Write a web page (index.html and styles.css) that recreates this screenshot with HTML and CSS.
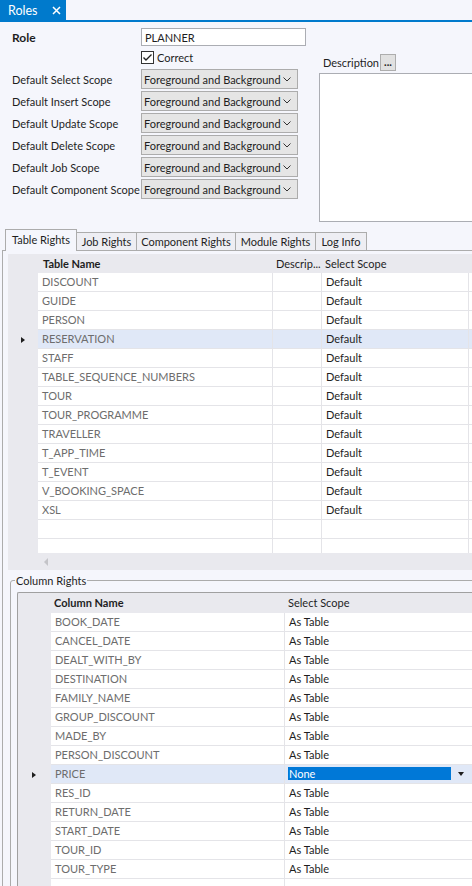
FILE: index.html
```html
<!DOCTYPE html>
<html>
<head>
<meta charset="utf-8">
<title>Roles</title>
<link rel="stylesheet" href="styles.css">
</head>
<body>
<div class="doc-tabs">
  <div class="doc-tab"><span>Roles</span><svg class="close" width="9" height="9" viewBox="0 0 9 9"><path d="M1 1L8 8M8 1L1 8" stroke="#fff" stroke-width="1.5" fill="none"/></svg></div>
</div>

<div class="form">
  <div class="fields">
    <div class="row role-row"><span class="lbl bold role-lbl">Role</span><div class="textbox">PLANNER</div></div>
    <div class="row check-row"><span class="lbl"></span><span class="check"><svg width="11" height="11" viewBox="0 0 11 11"><path d="M1.5 5.5L4 8L9.5 2.5" stroke="#222" stroke-width="1.4" fill="none"/></svg></span><span>Correct</span></div>
    <div class="combos">
      <div class="row"><span class="lbl">Default Select Scope</span><div class="combo"><span>Foreground and Background</span><svg width="8" height="5" viewBox="0 0 8 5"><path d="M0.5 0.5L4 4L7.5 0.5" stroke="#333" fill="none"/></svg></div></div>
      <div class="row"><span class="lbl">Default Insert Scope</span><div class="combo"><span>Foreground and Background</span><svg width="8" height="5" viewBox="0 0 8 5"><path d="M0.5 0.5L4 4L7.5 0.5" stroke="#333" fill="none"/></svg></div></div>
      <div class="row"><span class="lbl">Default Update Scope</span><div class="combo"><span>Foreground and Background</span><svg width="8" height="5" viewBox="0 0 8 5"><path d="M0.5 0.5L4 4L7.5 0.5" stroke="#333" fill="none"/></svg></div></div>
      <div class="row"><span class="lbl">Default Delete Scope</span><div class="combo"><span>Foreground and Background</span><svg width="8" height="5" viewBox="0 0 8 5"><path d="M0.5 0.5L4 4L7.5 0.5" stroke="#333" fill="none"/></svg></div></div>
      <div class="row"><span class="lbl">Default Job Scope</span><div class="combo"><span>Foreground and Background</span><svg width="8" height="5" viewBox="0 0 8 5"><path d="M0.5 0.5L4 4L7.5 0.5" stroke="#333" fill="none"/></svg></div></div>
      <div class="row"><span class="lbl">Default Component Scope</span><div class="combo"><span>Foreground and Background</span><svg width="8" height="5" viewBox="0 0 8 5"><path d="M0.5 0.5L4 4L7.5 0.5" stroke="#333" fill="none"/></svg></div></div>
    </div>
  </div>
  <div class="desc">
    <div class="desc-head"><span class="desc-label">Description</span><span class="dots">...</span></div>
    <div class="desc-box"></div>
  </div>
</div>

<div class="tabstrip">
  <div class="tab active w1">Table Rights</div>
  <div class="tab w2">Job Rights</div>
  <div class="tab w3">Component Rights</div>
  <div class="tab w4">Module Rights</div>
  <div class="tab w5">Log Info</div>
</div>

<div class="page">
  <div class="grid tgrid">
    <div class="thead">
      <div class="rh"></div>
      <div class="th t-name bold">Table Name</div>
      <div class="th t-desc">Descrip...</div>
      <div class="th t-scope">Select Scope</div>
    </div>
    <div class="tbody">
      <div class="tr"><div class="rh"></div><div class="td t-name name">DISCOUNT</div><div class="td t-desc"></div><div class="td t-scope">Default</div><div class="td t-extra"></div></div>
      <div class="tr"><div class="rh"></div><div class="td t-name name">GUIDE</div><div class="td t-desc"></div><div class="td t-scope">Default</div><div class="td t-extra"></div></div>
      <div class="tr"><div class="rh"></div><div class="td t-name name">PERSON</div><div class="td t-desc"></div><div class="td t-scope">Default</div><div class="td t-extra"></div></div>
      <div class="tr sel"><div class="rh"><span class="tri"></span></div><div class="td t-name name">RESERVATION</div><div class="td t-desc"></div><div class="td t-scope">Default</div><div class="td t-extra"></div></div>
      <div class="tr"><div class="rh"></div><div class="td t-name name">STAFF</div><div class="td t-desc"></div><div class="td t-scope">Default</div><div class="td t-extra"></div></div>
      <div class="tr"><div class="rh"></div><div class="td t-name name">TABLE_SEQUENCE_NUMBERS</div><div class="td t-desc"></div><div class="td t-scope">Default</div><div class="td t-extra"></div></div>
      <div class="tr"><div class="rh"></div><div class="td t-name name">TOUR</div><div class="td t-desc"></div><div class="td t-scope">Default</div><div class="td t-extra"></div></div>
      <div class="tr"><div class="rh"></div><div class="td t-name name">TOUR_PROGRAMME</div><div class="td t-desc"></div><div class="td t-scope">Default</div><div class="td t-extra"></div></div>
      <div class="tr"><div class="rh"></div><div class="td t-name name">TRAVELLER</div><div class="td t-desc"></div><div class="td t-scope">Default</div><div class="td t-extra"></div></div>
      <div class="tr"><div class="rh"></div><div class="td t-name name">T_APP_TIME</div><div class="td t-desc"></div><div class="td t-scope">Default</div><div class="td t-extra"></div></div>
      <div class="tr"><div class="rh"></div><div class="td t-name name">T_EVENT</div><div class="td t-desc"></div><div class="td t-scope">Default</div><div class="td t-extra"></div></div>
      <div class="tr"><div class="rh"></div><div class="td t-name name">V_BOOKING_SPACE</div><div class="td t-desc"></div><div class="td t-scope">Default</div><div class="td t-extra"></div></div>
      <div class="tr"><div class="rh"></div><div class="td t-name name">XSL</div><div class="td t-desc"></div><div class="td t-scope">Default</div><div class="td t-extra"></div></div>
      <div class="tr"><div class="rh"></div><div class="td t-name"></div><div class="td t-desc"></div><div class="td t-scope"></div><div class="td t-extra"></div></div>
      <div class="tr"><div class="rh"></div><div class="td t-name"></div><div class="td t-desc"></div><div class="td t-scope"></div><div class="td t-extra"></div></div>
    </div>
    <div class="hscroll"><span class="larrow"></span></div>
  </div>

  <fieldset class="group">
    <legend>Column Rights</legend>
    <div class="grid cgrid">
      <div class="thead chead">
        <div class="rh"></div>
        <div class="th c-name bold">Column Name</div>
        <div class="th c-scope">Select Scope</div>
      </div>
      <div class="tr"><div class="rh"></div><div class="td c-name name">BOOK_DATE</div><div class="td c-scope">As Table</div></div>
      <div class="tr"><div class="rh"></div><div class="td c-name name">CANCEL_DATE</div><div class="td c-scope">As Table</div></div>
      <div class="tr"><div class="rh"></div><div class="td c-name name">DEALT_WITH_BY</div><div class="td c-scope">As Table</div></div>
      <div class="tr"><div class="rh"></div><div class="td c-name name">DESTINATION</div><div class="td c-scope">As Table</div></div>
      <div class="tr"><div class="rh"></div><div class="td c-name name">FAMILY_NAME</div><div class="td c-scope">As Table</div></div>
      <div class="tr"><div class="rh"></div><div class="td c-name name">GROUP_DISCOUNT</div><div class="td c-scope">As Table</div></div>
      <div class="tr"><div class="rh"></div><div class="td c-name name">MADE_BY</div><div class="td c-scope">As Table</div></div>
      <div class="tr"><div class="rh"></div><div class="td c-name name">PERSON_DISCOUNT</div><div class="td c-scope">As Table</div></div>
      <div class="tr sel"><div class="rh"><span class="tri"></span></div><div class="td c-name name">PRICE</div><div class="td c-scope editing"><span class="none-sel">None</span><span class="darrow"></span></div></div>
      <div class="tr"><div class="rh"></div><div class="td c-name name">RES_ID</div><div class="td c-scope">As Table</div></div>
      <div class="tr"><div class="rh"></div><div class="td c-name name">RETURN_DATE</div><div class="td c-scope">As Table</div></div>
      <div class="tr"><div class="rh"></div><div class="td c-name name">START_DATE</div><div class="td c-scope">As Table</div></div>
      <div class="tr"><div class="rh"></div><div class="td c-name name">TOUR_ID</div><div class="td c-scope">As Table</div></div>
      <div class="tr"><div class="rh"></div><div class="td c-name name">TOUR_TYPE</div><div class="td c-scope">As Table</div></div>
      <div class="tr"><div class="rh"></div><div class="td c-name"></div><div class="td c-scope"></div></div>
    </div>
  </fieldset>
</div>
</body>
</html>
```

FILE: styles.css
```css
* { box-sizing: border-box; }
html, body { margin: 0; padding: 0; }
body {
  width: 472px;
  height: 886px;
  overflow: hidden;
  background: #F5F6FC;
  font-family: Lato, "Liberation Sans", sans-serif;
  font-size: 11px;
  color: #1E1E1E;
}
.bold { font-weight: bold; }

/* document tab */
.doc-tabs {
  height: 22px;
  border-bottom: 2px solid #007ACC;
  display: flex;
}
.doc-tab {
  width: 66px;
  height: 20px;
  background: #007ACC;
  color: #fff;
  font-size: 12.5px;
  display: flex;
  align-items: center;
  padding-left: 8px;
}
.doc-tab .close { margin-left: 15px; }

/* form */
.form {
  display: flex;
  padding: 6px 0 7px 0;
}
.fields {
  width: 306px;
  flex: none;
  padding-left: 12px;
}
.row { display: flex; align-items: center; }
.lbl { width: 129px; flex: none; white-space: nowrap; }
.role-lbl { font-size: 12px; }
.role-row { height: 18px; }
.textbox {
  width: 165px;
  height: 18px;
  border: 1px solid #ABADB3;
  background: #fff;
  padding-left: 3px;
  display: flex;
  align-items: center;
}
.check-row { height: 18px; margin-top: 2px; }
.check {
  width: 13px;
  height: 13px;
  border: 1px solid #333;
  background: #fff;
  margin-right: 3px;
  display: flex;
  align-items: center;
  justify-content: center;
}
.combos {
  margin-top: 3px;
  display: flex;
  flex-direction: column;
  gap: 2px;
}
.combo {
  width: 157px;
  height: 20px;
  border: 1px solid #ACACAC;
  background: #E5E5E5;
  display: flex;
  align-items: center;
  justify-content: space-between;
  padding: 0 6px 0 2px;
  white-space: nowrap;
}
.desc { margin-left: 13px; margin-top: 26px; }
.desc-head { height: 17px; display: flex; align-items: center; }
.desc-label { width: 61px; padding-left: 4px; }
.dots {
  width: 16px;
  height: 17px;
  border: 1px solid #ADADAD;
  background: #E1E1E1;
  display: flex;
  align-items: center;
  justify-content: center;
  font-weight: bold;
  font-size: 11px;
  line-height: 1;
  padding-bottom: 2px;
}
.desc-box {
  width: 170px;
  height: 149px;
  margin-top: 2px;
  border: 1px solid #ABADB3;
  background: #fff;
}

/* tabs */
.tabstrip {
  margin-left: 2px;
  height: 22px;
  border-bottom: 1px solid #ACACAC;
  display: flex;
  align-items: flex-end;
  padding-left: 3px;
}
.tab {
  height: 18px;
  border: 1px solid #ACACAC;
  border-bottom: none;
  background: #EEEEF3;
  display: flex;
  align-items: center;
  justify-content: center;
  margin-left: -1px;
  white-space: nowrap;
}
.tab.active {
  height: 22px;
  margin-bottom: -1px;
  margin-left: 0;
  background: #F5F6FC;
  padding-bottom: 2px;
}
.w1 { width: 72px; }
.w2 { width: 61px; }
.w3 { width: 100px; }
.w4 { width: 81px; }
.w5 { width: 52px; }

/* page */
.page {
  margin-left: 2px;
  border-left: 1px solid #ACACAC;
  padding: 3px 0 0 5px;
}

/* grids */
.grid { background: #E9E9EE; }
.tgrid {
  width: 470px;
  height: 316px;
  display: flex;
  flex-direction: column;
}
.thead { display: flex; height: 19px; flex: none; align-items: center; padding-bottom: 1px; }
.tbody { height: 280px; overflow: hidden; flex: none; }
.hscroll { height: 17px; flex: none; display: flex; align-items: center; padding-left: 36px; }
.larrow {
  width: 0; height: 0;
  border-top: 4px solid transparent;
  border-bottom: 4px solid transparent;
  border-right: 4px solid #C4C4C8;
}
.tr { display: flex; height: 19px; }
.rh {
  width: 30px;
  flex: none;
  display: flex;
  align-items: center;
  justify-content: center;
}
.tri {
  width: 0; height: 0;
  border-top: 3.5px solid transparent;
  border-bottom: 3.5px solid transparent;
  border-left: 4px solid #1E1E1E;
  margin-left: -1px;
}
.th { flex: none; padding-left: 5px; white-space: nowrap; }
.td {
  flex: none;
  height: 19px;
  background: #fff;
  border-right: 1px solid #E4E4E8;
  border-bottom: 1px solid #E4E4E8;
  padding-left: 4px;
  padding-bottom: 1px;
  display: flex;
  align-items: center;
  white-space: nowrap;
  overflow: hidden;
}
.name { color: #6D6D6D; }
.tr.sel .td { background: #E0E8F7; }

.t-name { width: 235px; }
.t-desc { width: 49px; }
.th.t-desc { padding-left: 3px; }
.th.t-scope { padding-left: 3px; }
.t-scope { width: 147px; }
.t-extra { width: 10px; }

/* group */
fieldset.group {
  margin: 3px 0 0 2px;
  padding: 4px 0 0 6px;
  border: 1px solid #ABABAB;
  border-radius: 3px;
  min-width: 0;
  width: 480px;
  height: 400px;
}
fieldset.group legend {
  padding: 0 1px;
  margin-left: -2px;
  line-height: 15px;
}
.cgrid {
  border-top: 1px solid #A0A0A0;
  border-left: 1px solid #A0A0A0;
  border-top-left-radius: 2px;
  width: 460px;
  height: 400px;
}
.cgrid .chead { height: 20px; }
.cgrid .rh { width: 33px; }
.c-name { width: 234px; }
.th.c-name { padding-left: 3px; }
.th.c-scope { padding-left: 3px; }
.c-scope { width: 190px; }
.editing { padding-left: 3px; }
.none-sel {
  width: 163px;
  height: 13px;
  background: #0078D7;
  color: #fff;
  padding-left: 1px;
  display: flex;
  align-items: center;
}
.darrow {
  width: 0; height: 0;
  margin-left: 7px;
  border-left: 3.5px solid transparent;
  border-right: 3.5px solid transparent;
  border-top: 4px solid #1E1E1E;
}
```
